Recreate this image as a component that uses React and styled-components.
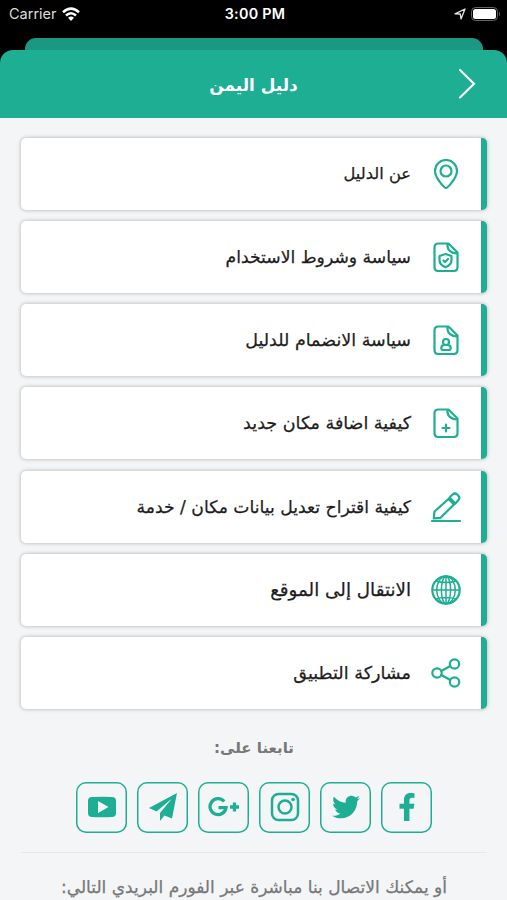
import styled, { createGlobalStyle } from 'styled-components'
import { FaTwitter, FaFacebookF } from 'react-icons/fa'

const GREEN = '#1dae94'

const GlobalStyle = createGlobalStyle`
  * { box-sizing: border-box; }
  body {
    margin: 0;
    background: #000;
    font-family: "DejaVu Sans", sans-serif;
  }
`;

const Screen = styled.div`
  width: 507px;
  height: 900px;
  overflow: hidden;
  display: flex;
  flex-direction: column;
  background: #000;
`;

const StatusBar = styled.div`
  display: grid;
  grid-template-columns: 1fr auto 1fr;
  align-items: center;
  flex: none;
  height: 38px;
  padding: 0 6px 11px 9px;
  color: #fff;
  font-family: Inter, sans-serif;
  font-size: 14.5px;
`;

const StatusGroup = styled.div`
  display: flex;
  align-items: center;
  gap: ${p => p.$gap}px;
  justify-content: ${p => p.$end ? 'flex-end' : 'flex-start'};
  color: #dcdcdc;
`;

const Clock = styled.span`
  font-weight: 600;
  font-size: 14.3px;
  letter-spacing: 0.3px;
`;

const BackSheet = styled.div`
  flex: none;
  height: 12px;
  margin: 0 24px 0 25px;
  border-radius: 11px 11px 0 0;
  background: #1b9881;
`;

const Header = styled.header`
  display: grid;
  grid-template-columns: 80px 1fr 80px;
  align-items: center;
  flex: none;
  height: 68px;
  border-radius: 13px 13px 0 0;
  background: ${GREEN};
  color: #fff;
`;

const Title = styled.h1`
  grid-column: 2;
  margin: 0;
  padding-top: 2px;
  text-align: center;
  font-size: 16.9px;
  line-height: 30px;
  font-weight: 700;
  white-space: nowrap;
`;

const Back = styled.svg`
  width: 20px;
  height: 32px;
  justify-self: center;
`;

const Content = styled.main`
  flex: 1;
  min-height: 0;
  padding: 20.4px 20px 0 21px;
  background: #f3f5f7;
  display: flex;
  flex-direction: column;
`;

const Menu = styled.nav`
  display: flex;
  flex-direction: column;
  flex: none;
  gap: 11.04px;
`;

const MenuItem = styled.a`
  display: flex;
  align-items: center;
  gap: 20px;
  height: 72px;
  padding-right: 20px;
  border-right: 6px solid ${GREEN};
  border-radius: 5px;
  background: #fff;
  box-shadow: 0 0 3px 1px rgba(0, 0, 0, 0.15), 0 0 7px rgba(0, 0, 0, 0.06);
  color: #1d1d1d;
`;

const ItemIcon = styled.svg`
  flex: none;
  width: 30px;
  height: 30px;
  fill: none;
  stroke: ${GREEN};
  stroke-width: 2.2;
  stroke-linecap: round;
  stroke-linejoin: round;
`;

const Label = styled.span`
  font-size: ${p => p.$size}px;
  line-height: 30px;
  white-space: nowrap;
  -webkit-text-stroke: 0.25px currentColor;
`;

const Follow = styled.h2`
  flex: none;
  margin: 23px 0 0;
  text-align: center;
  color: #777;
  font-size: 15px;
  line-height: 32px;
  font-weight: 700;
`;

const Socials = styled.div`
  display: flex;
  flex: none;
  justify-content: center;
  gap: 10px;
  margin-top: 18px;
`;

const Social = styled.a`
  display: flex;
  align-items: center;
  justify-content: center;
  width: 51px;
  height: 51px;
  border-radius: 10px;
  box-shadow: inset 0 0 0 1.5px ${GREEN};
  color: ${GREEN};
`;

const Divider = styled.hr`
  flex: none;
  width: 100%;
  height: 1px;
  margin: 19px 0 0;
  border: 0;
  background: #e6e9ea;
`;

const Contact = styled.p`
  flex: none;
  margin: 19px 0 0;
  text-align: center;
  color: #777;
  font-size: 17.05px;
  line-height: 30px;
  white-space: nowrap;
  -webkit-text-stroke: 0.25px currentColor;
`;

const page = <path d="M7.500 1.500H17.500L26.500 10.500V25Q26.500 29 22.500 29H7.500Q3.500 29 3.500 25V5.500Q3.500 1.500 7.500 1.500ZM16.500 2V4.500Q17.500 11 26 11.500" />

const items = [
  {
    text: 'عن الدليل',
    size: 16.3,
    icon: <><path d="M15 29C13.500 29 4 19 4 12A11 11 0 0 1 26 12C26 19 16.500 29 15 29Z" /><circle cx="15" cy="12" r="5.500" /></>,
  },
  {
    text: 'سياسة وشروط الاستخدام',
    size: 17.2,
    icon: <>{page}<path d="M14.500 12L20.500 14V18Q20.500 23 14.500 25.200Q8.500 23 8.500 18V14Z" /><path d="M12.500 18.500L14 20L17 17" /></>,
  },
  {
    text: 'سياسة الانضمام للدليل',
    size: 17.5,
    icon: <>{page}<circle cx="15" cy="17" r="3" /><path d="M12.800 20Q10.300 20.500 10.300 23Q10.300 25 12 25H18Q19.700 25 19.700 23Q19.700 20.500 17.200 20Z" /></>,
  },
  {
    text: 'كيفية اضافة مكان جديد',
    size: 17.5,
    icon: <>{page}<path d="M15 16.500V23.500M11.500 20H18.500" /></>,
  },
  {
    text: 'كيفية اقتراح تعديل بيانات مكان / خدمة',
    size: 17.2,
    icon: <><path d="M1 29H29" /><path d="M2.800 26.300L3.500 19.500L17.500 7L23 12.500L9.500 25.800ZM18.500 5.500L21.500 2.500Q24 0.500 26.200 2.500L27.500 4Q29.300 6 27.500 8L24.500 11.500Z" /></>,
  },
  {
    text: 'الانتقال إلى الموقع',
    size: 18.3,
    icon: <><circle cx="15" cy="15" r="13.700" /><g strokeWidth="1.500"><ellipse cx="15" cy="15" rx="9.300" ry="13.700" /><ellipse cx="15" cy="15" rx="4.600" ry="13.700" /><path d="M15 1.500V28.500M1.500 15H28.500M5 6Q15 9 25 6M5 24Q15 21 25 24" /></g></>,
  },
  {
    text: 'مشاركة التطبيق',
    size: 17.6,
    icon: <><circle cx="6" cy="15" r="4.700" /><circle cx="23.500" cy="6" r="4.700" /><circle cx="23.500" cy="24" r="4.700" /><path d="M10.300 13L19.300 8M10.300 17L19.300 22" /></>,
  },
]

export default function App() {
  return (
    <>
      <GlobalStyle />
      <Screen>
        <StatusBar>
          <StatusGroup $gap={5}>
            <span>Carrier</span>
            <svg width="18" height="14" viewBox="0 0 18 14" fill="none" stroke="#fff" strokeWidth="2.600">
              <path d="M1 5.200Q9 -2 17 5.200M4 8.500Q9 4 14 8.500" />
              <path d="M6 10.800Q9 8.300 12 10.800L9 14Z" fill="#fff" stroke="none" />
            </svg>
          </StatusGroup>
          <Clock>3:00 PM</Clock>
          <StatusGroup $gap={5} $end>
            <svg width="12" height="12" viewBox="0 0 12 12" fill="none" stroke="#e4e4e4" strokeWidth="1.300" strokeLinejoin="round">
              <path d="M1 5.800L11 1L7 11L6.300 6Z" />
            </svg>
            <svg width="30" height="14" viewBox="0 0 30 14">
              <rect x="0.500" y="0.500" width="26" height="13" rx="4" fill="none" stroke="#666" />
              <rect x="2" y="2" width="23" height="10" rx="2.500" fill="#fff" />
              <path d="M28 4.500Q30 7 28 9.500Z" fill="#666" />
            </svg>
          </StatusGroup>
        </StatusBar>
        <BackSheet />
        <Header>
          <Title dir="rtl">دليل اليمن</Title>
          <Back viewBox="0 0 20 32" fill="none" stroke="#fff" strokeWidth="2.200" strokeLinecap="round">
            <path d="M3 2L17 15.700L3 29.500" />
          </Back>
        </Header>
        <Content dir="rtl">
          <Menu>
            {items.map(item => (
              <MenuItem key={item.text}>
                <ItemIcon viewBox="0 0 30 30">{item.icon}</ItemIcon>
                <Label $size={item.size}>{item.text}</Label>
              </MenuItem>
            ))}
          </Menu>
          <Follow>تابعنا على:</Follow>
          <Socials>
            <Social><FaFacebookF size={28} /></Social>
            <Social><FaTwitter size={28} /></Social>
            <Social>
              <svg width="30" height="30" viewBox="0 0 30 30" fill="none" stroke="currentColor" strokeWidth="2.500">
                <rect x="2" y="2" width="26" height="26" rx="6.500" />
                <circle cx="15" cy="15" r="6.500" />
                <circle cx="23" cy="7.500" r="1.800" fill="currentColor" stroke="none" />
              </svg>
            </Social>
            <Social>
              <svg width="32" height="20" viewBox="0 0 32 20" fill="none" stroke="currentColor" strokeWidth="3.300">
                <path d="M16.200 4.500A8 8 0 1 0 18 10.700H10.500" />
                <path d="M26.500 5.500V14.500M22 10H31" />
              </svg>
            </Social>
            <Social>
              <svg width="30" height="30" viewBox="0 0 30 30" fill="currentColor">
                <path d="M29 1L1 16L8.500 19.500L24 6.500L12 21V29L16.500 23.500L24 26.500Z" />
              </svg>
            </Social>
            <Social>
              <svg width="30" height="22" viewBox="0 0 30 22" fill="currentColor">
                <path fillRule="evenodd" d="M5 1Q15 0.500 25 1Q29 1 29 5V17Q29 21 25 21Q15 21.500 5 21Q1 21 1 17V5Q1 1 5 1ZM11 5V17L21.500 11Z" />
              </svg>
            </Social>
          </Socials>
          <Divider />
          <Contact>أو يمكنك الاتصال بنا مباشرة عبر الفورم البريدي التالي:</Contact>
        </Content>
      </Screen>
    </>
  )
}
